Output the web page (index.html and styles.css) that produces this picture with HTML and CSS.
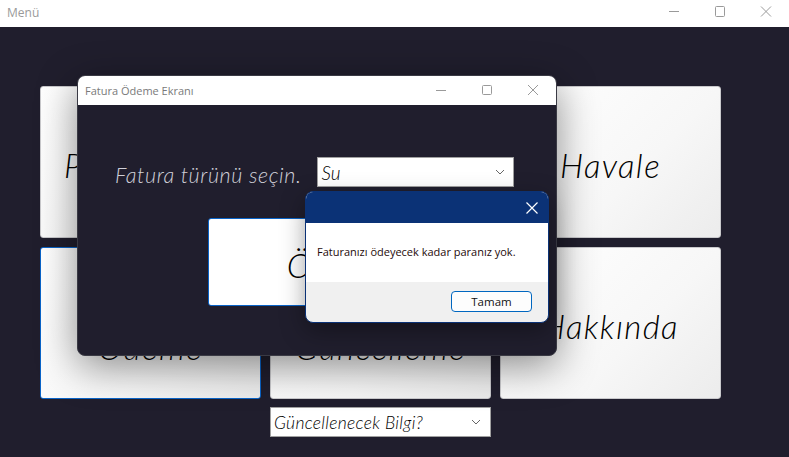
FILE: index.html
```html
<!DOCTYPE html>
<html lang="tr">
<head>
<meta charset="utf-8">
<title>Menü</title>
<link rel="stylesheet" href="styles.css">
</head>
<body>
<div class="app">
  <div class="titlebar">
    <span class="title">Menü</span>
    <div class="controls">
      <svg class="ctl" width="46" height="27" viewBox="0 0 46 27"><line x1="18" y1="11.5" x2="28" y2="11.5" stroke="#9a9a9a" stroke-width="1"/></svg>
      <svg class="ctl" width="46" height="27" viewBox="0 0 46 27"><rect x="18.5" y="6.5" width="9" height="10" rx="1" fill="none" stroke="#9a9a9a" stroke-width="1"/></svg>
      <svg class="ctl" width="46" height="27" viewBox="0 0 46 27"><path d="M18 6.5 L28 16.5 M28 6.5 L18 16.5" stroke="#9a9a9a" stroke-width="1"/></svg>
    </div>
  </div>
  <main class="desk">
    <div class="grid">
      <div class="card"><span>Para Çekme</span></div>
      <div class="card"><span>Para Yatırma</span></div>
      <div class="card"><span>Havale</span></div>
      <div class="card focus"><span>Fatura<br>Ödeme</span></div>
      <div class="card"><span>Bilgi<br>Güncelleme</span></div>
      <div class="card"><span>Hakkında</span></div>
      <div class="select wide col2"><span>Güncellenecek Bilgi?</span><svg width="10" height="6" viewBox="0 0 10 6"><path d="M1 1 L5 5 L9 1" fill="none" stroke="#666" stroke-width="1"/></svg></div>
    </div>

    <section class="win">
      <div class="win-title">
        <span class="wt">Fatura Ödeme Ekranı</span>
        <div class="controls">
          <svg width="46" height="29" viewBox="0 0 46 29"><line x1="18" y1="14.5" x2="28" y2="14.5" stroke="#9a9a9a" stroke-width="1"/></svg>
          <svg width="46" height="29" viewBox="0 0 46 29"><rect x="18.5" y="9.5" width="9" height="9" rx="1" fill="none" stroke="#9a9a9a" stroke-width="1"/></svg>
          <svg width="46" height="29" viewBox="0 0 46 29"><path d="M18 9 L28 19 M28 9 L18 19" stroke="#9a9a9a" stroke-width="1"/></svg>
        </div>
      </div>
      <div class="win-body">
        <div class="row">
          <span class="label">Fatura türünü seçin.</span>
          <div class="select small"><span>Su</span><svg width="10" height="6" viewBox="0 0 10 6"><path d="M1 1 L5 5 L9 1" fill="none" stroke="#666" stroke-width="1"/></svg></div>
        </div>
        <div class="pay"><span>Öde</span></div>
      </div>
    </section>

    <section class="msg">
      <div class="msg-title">
        <svg width="14" height="14" viewBox="0 0 14 14"><path d="M1.5 1.5 L12.5 12.5 M12.5 1.5 L1.5 12.5" stroke="#fff" stroke-width="1.2"/></svg>
      </div>
      <div class="msg-body">Faturanızı ödeyecek kadar paranız yok.</div>
      <div class="msg-foot"><div class="btn">Tamam</div></div>
    </section>
  </main>
</div>
</body>
</html>
```

FILE: styles.css
```css
* { box-sizing: border-box; }
html, body { margin: 0; padding: 0; }
body {
  width: 789px;
  height: 457px;
  overflow: hidden;
  background: #201e2d;
  font-family: "Open Sans", "Noto Sans", sans-serif;
}
.app { display: flex; flex-direction: column; height: 457px; }
.titlebar {
  height: 27px;
  background: #ffffff;
  display: flex;
  align-items: center;
  justify-content: space-between;
}
.title {
  font-size: 12px;
  color: #9a9a9a;
  padding-left: 7px;
  padding-bottom: 3px;
}
.controls { display: flex; align-self: stretch; }
.ctl { display: block; }
.desk {
  position: relative;
  flex: 1;
  background: #201e2d;
  padding: 59px 0 0 40px;
}
.grid {
  display: grid;
  grid-template-columns: 221px 221px 221px;
  grid-template-rows: 152px 152px auto;
  gap: 9px;
}
.card {
  background: linear-gradient(135deg, #ffffff 0%, #f7f7f7 60%, #ececec 100%);
  border: 1px solid #c9c9cc;
  border-radius: 3px;
  display: flex;
  align-items: center;
  justify-content: center;
  text-align: center;
  font-family: "Lato", sans-serif;
  font-weight: 300;
  font-style: italic;
  font-size: 33px;
  line-height: 42px;
  letter-spacing: 1.4px;
  color: #000;
  padding-top: 6px;
  white-space: nowrap;
}
.card.focus { border-color: #0a64c8; }
.select {
  background: #fff;
  border: 1px solid #a0a0a0;
  display: flex;
  align-items: center;
  justify-content: space-between;
  font-family: "Lato", sans-serif;
  font-style: italic;
  font-weight: 300;
  color: #000;
}
.select.wide {
  height: 30px;
  margin-top: -1px;
  font-size: 17.5px;
  letter-spacing: 0.3px;
  padding: 0 9px 0 3px;
}
.col2 { grid-column: 2; }

.win {
  position: absolute;
  left: 77px;
  top: 48px;
  width: 480px;
  height: 281px;
  border-radius: 8px;
  overflow: hidden;
  background: #201e2d;
  border: 1px solid #3a3a44;
  box-shadow: 0 10px 40px rgba(0, 0, 0, 0.45);
  display: flex;
  flex-direction: column;
}
.win-title {
  height: 29px;
  background: #fff;
  display: flex;
  align-items: center;
  justify-content: space-between;
}
.wt { font-size: 11px; color: #7a7a7a; padding-left: 7px; }
.win-body { flex: 1; padding: 51px 0 0 37px; }
.row { display: flex; align-items: center; gap: 16px; }
.label {
  font-family: "Lato", sans-serif;
  font-weight: 300;
  font-style: italic;
  font-size: 21.5px;
  letter-spacing: 0.6px;
  color: #cfcfd8;
  padding-top: 6px;
}
.select.small {
  width: 197px;
  height: 30px;
  font-size: 19px;
  padding: 0 8px 0 3px;
}
.pay {
  margin: 30px 0 0 93px;
  width: 220px;
  height: 88px;
  background: linear-gradient(90deg, #ffffff 0%, #ffffff 40%, #dedede 100%);
  border: 1px solid #0a64c8;
  border-radius: 3px;
  display: flex;
  align-items: center;
  justify-content: center;
  font-family: "Lato", sans-serif;
  font-weight: 300;
  font-style: italic;
  font-size: 34px;
  letter-spacing: 1.4px;
  color: #000;
  padding-top: 4px;
  white-space: nowrap;
}

.msg {
  position: absolute;
  left: 305px;
  top: 164px;
  width: 244px;
  height: 132px;
  border: 1px solid #0b3276;
  border-radius: 8px;
  overflow: hidden;
  background: #f0f0f0;
  box-shadow: 0 8px 24px rgba(0, 0, 0, 0.35);
  display: flex;
  flex-direction: column;
}
.msg-title {
  height: 31px;
  background: #0b3276;
  display: flex;
  align-items: center;
  justify-content: flex-end;
  padding-right: 9px;
}
.msg-body {
  height: 59px;
  background: #fff;
  font-family: "Open Sans", sans-serif;
  font-size: 11px;
  color: #1e0a0a;
  padding: 21px 0 0 11px;
  white-space: nowrap;
}
.msg-foot {
  flex: 1;
  display: flex;
  justify-content: flex-end;
  padding: 9px 16px 0 0;
}
.btn {
  width: 81px;
  height: 21px;
  border: 1px solid #0067c0;
  border-radius: 4px;
  background: #fdfdfd;
  font-family: "Open Sans", sans-serif;
  font-size: 11.5px;
  color: #111;
  display: flex;
  align-items: center;
  justify-content: center;
}
```
